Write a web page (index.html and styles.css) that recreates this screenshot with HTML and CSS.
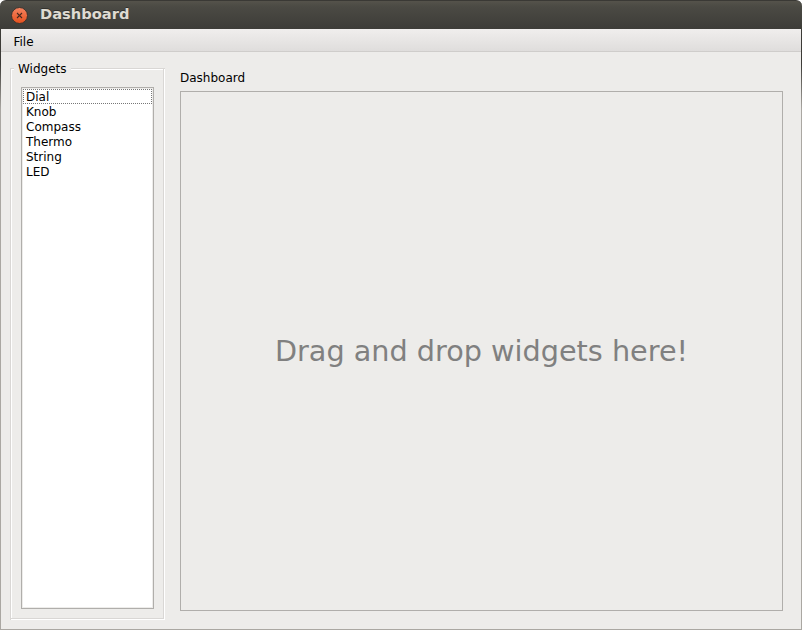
FILE: index.html
```html
<!DOCTYPE html>
<html lang="en">
<head>
<meta charset="utf-8">
<title>Dashboard</title>
<link rel="stylesheet" href="styles.css">
</head>
<body>
<div class="window">
  <header class="titlebar">
    <svg class="close" width="18" height="18" viewBox="0 0 18 18">
      <defs><linearGradient id="orange" x1="0" y1="0" x2="0" y2="1"><stop offset="0" stop-color="#f58461"/><stop offset="1" stop-color="#e6501d"/></linearGradient></defs>
      <circle cx="9.5" cy="8.5" r="8" fill="url(#orange)" stroke="#3a342e" stroke-width="1"/>
      <path d="M7 6l5 5M12 6l-5 5" stroke="#47291f" stroke-width="1.1"/>
    </svg>
    <h1 class="title">Dashboard</h1>
  </header>
  <div class="frame">
    <nav class="menubar"><span>File</span></nav>
    <main class="content">
      <section class="group">
        <h2 class="legend">Widgets</h2>
        <ul class="list">
          <li class="focused">Dial</li>
          <li>Knob</li>
          <li>Compass</li>
          <li>Thermo</li>
          <li>String</li>
          <li>LED</li>
        </ul>
      </section>
      <section class="dashboard">
        <h2 class="label">Dashboard</h2>
        <div class="drop">Drag and drop widgets here!</div>
      </section>
    </main>
  </div>
</div>
</body>
</html>
```
FILE: styles.css
```css
* { box-sizing: border-box; }
body { margin: 0; background: #fff; font: 12px/15px "DejaVu Sans", sans-serif; color: #000; }
h1, h2, ul { margin: 0; padding: 0; font-size: inherit; font-weight: normal; list-style: none; }
.window { width: 802px; height: 630px; display: flex; flex-direction: column; overflow: hidden; }
.titlebar {
  height: 29px;
  display: flex;
  align-items: flex-start;
  padding: 6px 0 0 10px;
  border-radius: 6px 6px 0 0;
  border-top: 1px solid #3a3935;
  background: linear-gradient(#55534b, #4b4a44 20%, #3d3c38);
}
.close { flex: none; }
.title { margin: -2px 0 0 12px; font-size: 14.67px; line-height: 18px; font-weight: bold; color: #dfdbd2; text-shadow: 0 -1px #32312d; }
.frame {
  flex: 1;
  display: flex;
  flex-direction: column;
  padding: 0 1px 1px;
  background: linear-gradient(#3c3b37, #3c3b37 35px, #aaa7a2 80px);
}
.menubar {
  height: 23px;
  padding: 6px 0 0 12.5px;
  background: linear-gradient(#f0eeed, #dfdddc);
  border-bottom: 1px solid #cfcdcb;
}
.content { flex: 1; display: flex; gap: 15px; padding: 9px 18px 9px 9px; background: #edecea; }
.group {
  width: 155px;
  display: flex;
  flex-direction: column;
  margin-top: 7px;
  padding: 0 10px 11px;
  border: 1px solid #d9d7d5;
  border-width: 1px 0 0 1px;
  box-shadow: inset -1px -1px #fff, inset -2px -2px #d9d7d5, inset 1px 1px #fff;
}
.legend { align-self: flex-start; margin: -7px 0 10px -7px; padding: 0 4px; background: #edecea; }
.list { flex: 1; width: 133px; border: 1px solid #b0aeab; padding: 1px; background: #fff; box-shadow: inset 0 0 0 1px #edecea; }
.list li { height: 15px; padding-left: 3px; line-height: 17px; }
.list .focused { outline: 1px dotted #777; outline-offset: -1px; }
.dashboard { flex: 1; display: flex; flex-direction: column; }
.label { margin: 10px 0 5px; }
.drop {
  flex: 1;
  margin-bottom: 9px;
  border: 1px solid #b0aeab;
  display: flex;
  align-items: center;
  justify-content: center;
  font-size: 28.7px;
  line-height: 34px;
  color: #808080;
  white-space: nowrap;
}
```
